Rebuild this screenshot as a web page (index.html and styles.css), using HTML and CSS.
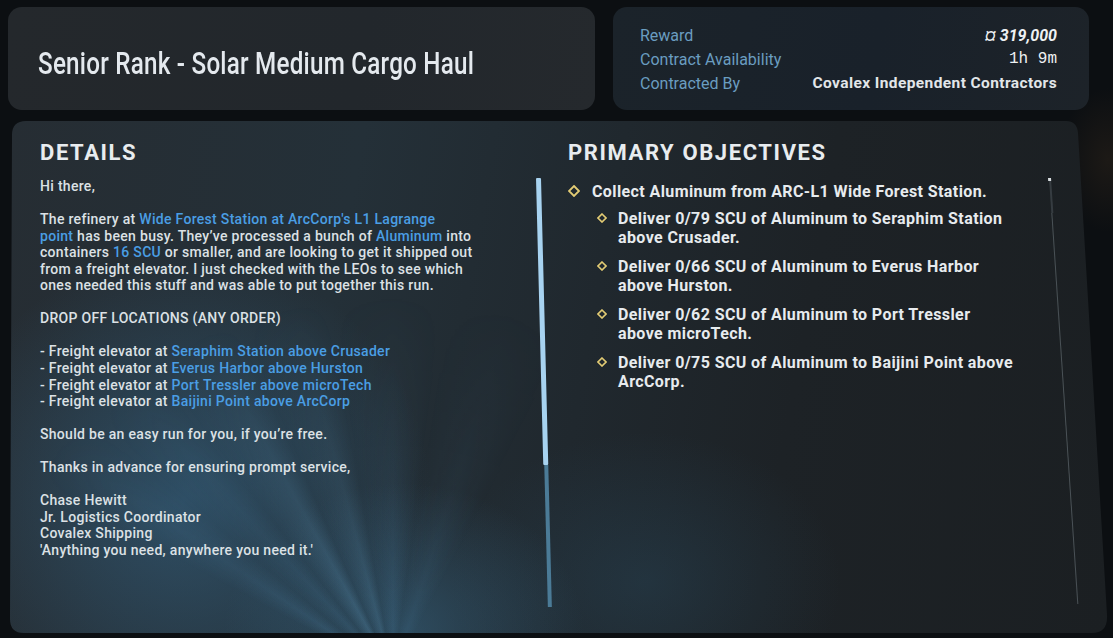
FILE: index.html
```html
<!DOCTYPE html>
<html lang="en">
<head>
<meta charset="utf-8">
<title>Senior Rank - Solar Medium Cargo Haul</title>
<link rel="stylesheet" href="styles.css">
</head>
<body>
<div class="screen">
  <header class="top">
    <div class="title-card">
      <h1 class="title">Senior Rank - Solar Medium Cargo Haul</h1>
    </div>
    <div class="info-card">
      <div class="info-row"><span class="label">Reward</span><span class="value reward">¤ 319,000</span></div>
      <div class="info-row"><span class="label">Contract Availability</span><span class="value mono">1h 9m</span></div>
      <div class="info-row"><span class="label">Contracted By</span><span class="value strong">Covalex Independent Contractors</span></div>
    </div>
  </header>

  <main class="panel">
    <section class="col details">
      <h2 class="heading">DETAILS</h2>
      <div class="body">
        <p>Hi there,</p>
        <p>The refinery at <span class="link">Wide Forest Station at ArcCorp's L1 Lagrange<br>point</span> has been busy. They’ve processed a bunch of <span class="link">Aluminum</span> into<br>containers <span class="link">16 SCU</span> or smaller, and are looking to get it shipped out<br>from a freight elevator. I just checked with the LEOs to see which<br>ones needed this stuff and was able to put together this run.</p>
        <p>DROP OFF LOCATIONS (ANY ORDER)</p>
        <p>- Freight elevator at <span class="link">Seraphim Station above Crusader</span><br>- Freight elevator at <span class="link">Everus Harbor above Hurston</span><br>- Freight elevator at <span class="link">Port Tressler above microTech</span><br>- Freight elevator at <span class="link">Baijini Point above ArcCorp</span></p>
        <p>Should be an easy run for you, if you’re free.</p>
        <p>Thanks in advance for ensuring prompt service,</p>
        <p>Chase Hewitt<br>Jr. Logistics Coordinator<br>Covalex Shipping<br>'Anything you need, anywhere you need it.'</p>
      </div>
      <div class="scroll scroll-left"><div class="thumb"></div><div class="rest"></div></div>
    </section>

    <section class="col objectives">
      <h2 class="heading">PRIMARY OBJECTIVES</h2>
      <ul class="obj-list">
        <li class="obj main">
          <svg class="dia" viewBox="0 0 12 12" width="12" height="12"><polygon points="6,1 11,6 6,11 1,6" fill="none" stroke="#e3cc74" stroke-width="1.8"/></svg>
          <span>Collect Aluminum from ARC-L1 Wide Forest Station.</span>
        </li>
        <li class="obj sub">
          <svg class="dia" viewBox="0 0 10 10" width="10" height="10"><polygon points="5,1 9,5 5,9 1,5" fill="none" stroke="#e3cc74" stroke-width="1.6"/></svg>
          <span>Deliver 0/79 SCU of Aluminum to Seraphim Station<br>above Crusader.</span>
        </li>
        <li class="obj sub">
          <svg class="dia" viewBox="0 0 10 10" width="10" height="10"><polygon points="5,1 9,5 5,9 1,5" fill="none" stroke="#e3cc74" stroke-width="1.6"/></svg>
          <span>Deliver 0/66 SCU of Aluminum to Everus Harbor<br>above Hurston.</span>
        </li>
        <li class="obj sub">
          <svg class="dia" viewBox="0 0 10 10" width="10" height="10"><polygon points="5,1 9,5 5,9 1,5" fill="none" stroke="#e3cc74" stroke-width="1.6"/></svg>
          <span>Deliver 0/62 SCU of Aluminum to Port Tressler<br>above microTech.</span>
        </li>
        <li class="obj sub">
          <svg class="dia" viewBox="0 0 10 10" width="10" height="10"><polygon points="5,1 9,5 5,9 1,5" fill="none" stroke="#e3cc74" stroke-width="1.6"/></svg>
          <span>Deliver 0/75 SCU of Aluminum to Baijini Point above<br>ArcCorp.</span>
        </li>
      </ul>
      <div class="scroll scroll-right"><div class="cap"></div><div class="upper"></div><div class="lower"></div></div>
    </section>
  </main>
</div>
</body>
</html>
```

FILE: styles.css
```css
* { box-sizing: border-box; }

html, body {
  margin: 0;
  padding: 0;
}

body {
  width: 1113px;
  height: 638px;
  overflow: hidden;
  background:
    radial-gradient(ellipse 60px 90px at 1108px 160px, rgba(60, 45, 30, 0.35), transparent 80%),
    #0c0f12;
  font-family: Roboto, "Liberation Sans", sans-serif;
  color: #dde2e6;
}

.screen {
  padding: 7px 0 0 8px;
}

/* ---------- top row ---------- */
.top {
  display: flex;
  height: 103px;
}

.title-card {
  width: 587px;
  border-radius: 14px;
  background: linear-gradient(100deg, #24282c 0%, #22272c 60%, #25292d 100%);
  display: flex;
  align-items: center;
  padding: 8px 0 0 30px;
}

.title {
  margin: 0;
  font-size: 32px;
  font-weight: 500;
  color: #e4e9ee;
  white-space: nowrap;
  transform: scaleX(0.757);
  transform-origin: left center;
  letter-spacing: 0.3px;
}

.info-card {
  width: 476px;
  margin-left: 18px;
  border-radius: 14px;
  background: linear-gradient(100deg, #1b232a 0%, #19212a 55%, #1d2329 100%);
  padding: 16px 32px 0 27px;
}

.info-row {
  display: flex;
  justify-content: space-between;
  align-items: center;
  height: 24px;
}

.label {
  font-size: 16px;
  color: #6a9dc0;
}

.value {
  color: #eef1f3;
}

.reward {
  font-size: 16px;
  font-weight: 700;
  font-style: italic;
}

.mono {
  font-family: "Liberation Mono", "DejaVu Sans Mono", monospace;
  font-size: 16px;
}

.strong {
  font-size: 15.5px;
  font-weight: 700;
  letter-spacing: 0.4px;
  color: #e2e6e9;
}

/* ---------- main panel ---------- */
.panel {
  position: relative;
  margin-top: 11px;
  width: 1100px;
  height: 512px;
  padding: 19px 57px 0 32px;
  display: grid;
  grid-template-columns: 501px 1fr;
  column-gap: 27px;
  clip-path: path("M 18 0 L 1058 0 Q 1069 0 1070 12 L 1099 494 Q 1100 512 1084 512 L 16 512 Q 2 512 2 498 L 4 14 Q 4 0 18 0 Z");
  background:
    radial-gradient(ellipse 330px 330px at 16% 74%, rgba(55, 105, 140, 0.55), transparent 75%),
    radial-gradient(ellipse 240px 200px at 36% 100%, rgba(60, 115, 150, 0.45), transparent 75%),
    radial-gradient(ellipse 260px 200px at 58% 90%, rgba(45, 85, 110, 0.30), transparent 75%),
    linear-gradient(100deg, #262d33 0%, #243038 30%, #20282e 52%, #1d2226 70%, #1b1f22 100%);
}

/* light rays fanning up from below the panel */
.panel::before {
  content: "";
  position: absolute;
  inset: 0;
  pointer-events: none;
  background:
    conic-gradient(from -62deg at 35% 108%,
      transparent 0deg,
      rgba(95, 160, 205, 0.14) 6deg,
      transparent 12deg,
      rgba(95, 160, 205, 0.10) 19deg,
      transparent 24deg,
      rgba(110, 175, 215, 0.20) 33deg,
      transparent 38deg,
      rgba(110, 175, 215, 0.16) 47deg,
      transparent 52deg,
      rgba(95, 160, 205, 0.12) 62deg,
      transparent 70deg,
      rgba(95, 160, 205, 0.08) 80deg,
      transparent 90deg,
      transparent 360deg);
  -webkit-mask-image: radial-gradient(ellipse 420px 380px at 35% 108%, #000 20%, transparent 100%);
  mask-image: radial-gradient(ellipse 420px 380px at 35% 108%, #000 20%, transparent 100%);
}

.col {
  position: relative;
  z-index: 1;
  display: grid;
  grid-template-columns: 1fr auto;
  grid-template-rows: auto 1fr;
  min-width: 0;
}

.heading {
  grid-column: 1 / span 2;
  margin: 0;
  font-size: 22px;
  line-height: 26px;
  font-weight: 700;
  letter-spacing: 1.6px;
  color: #e8ecef;
}

.body {
  padding-top: 12px;
  font-size: 14px;
  line-height: 16.55px;
  font-weight: 500;
  letter-spacing: 0.3px;
  color: #dce1e5;
  white-space: nowrap;
}

.body p {
  margin: 0 0 16.55px;
}

.link {
  color: #4a9ee4;
}

/* scrollbars */
.scroll {
  margin-top: 12px;
  display: flex;
  flex-direction: column;
  transform-origin: top center;
}

.scroll-left {
  width: 5px;
  height: 429px;
  transform: skewX(1.45deg);
}

.scroll-left .thumb {
  height: 287px;
  background: #a8d3f0;
  border-radius: 1px;
}

.scroll-left .rest {
  flex: 1;
  width: 4px;
  margin-left: 1px;
  background: #4b7b97;
}

.scroll-right {
  width: 3px;
  height: 426px;
  transform: skewX(3.8deg);
  align-items: center;
}

.scroll-right .cap {
  width: 3px;
  height: 3px;
  background: #d8dde0;
}

.scroll-right .upper {
  width: 2px;
  height: 32px;
  background: #363c41;
}

.scroll-right .lower {
  flex: 1;
  width: 1px;
  background: #4b5257;
}

/* objectives */
.obj-list {
  list-style: none;
  margin: 0;
  padding: 16px 0 0 0;
}

.obj {
  display: flex;
  align-items: flex-start;
  font-size: 16px;
  line-height: 19px;
  font-weight: 700;
  letter-spacing: 0.4px;
  color: #e7ebee;
  white-space: nowrap;
}

.obj .dia {
  flex: none;
}

.obj.main {
  margin-bottom: 8px;
}

.obj.main .dia {
  margin: 3px 12px 0 0;
}

.obj.sub {
  padding-left: 29px;
  margin-bottom: 10px;
}

.obj.sub .dia {
  margin: 4px 11px 0 0;
}
```
